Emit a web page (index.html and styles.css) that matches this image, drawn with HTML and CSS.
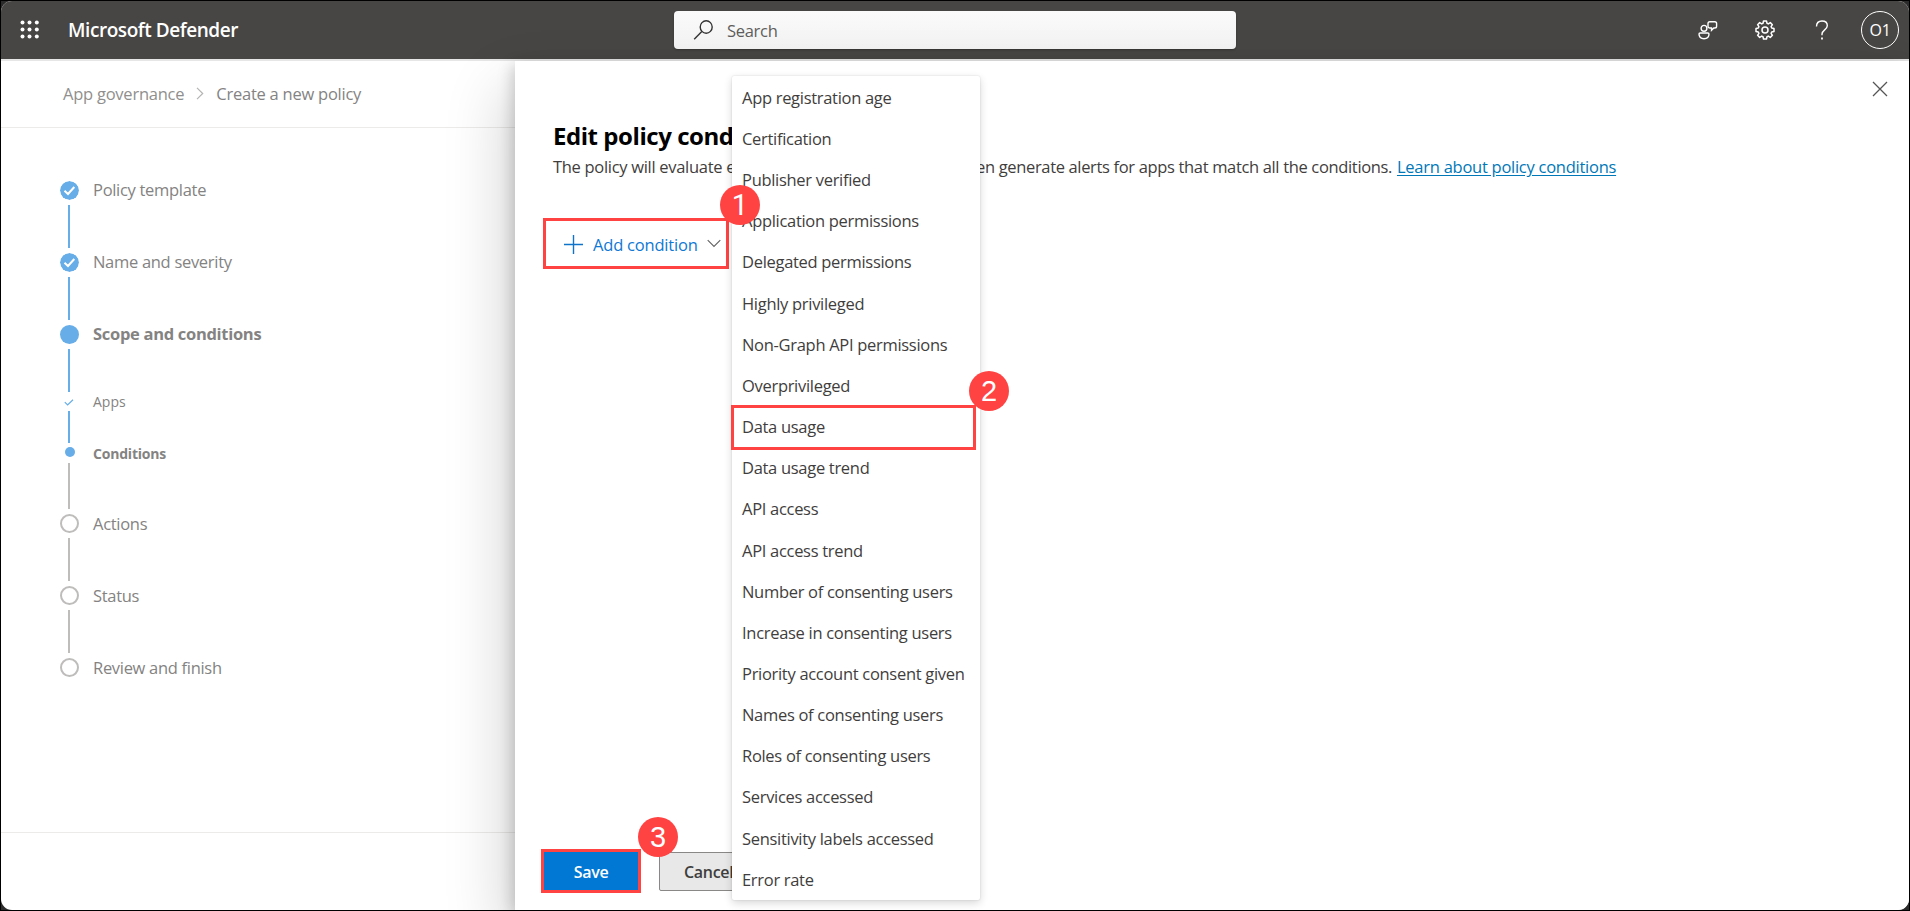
FILE: index.html
```html
<!DOCTYPE html>
<html lang="en">
<head>
<meta charset="utf-8">
<title>Microsoft Defender</title>
<link rel="stylesheet" href="styles.css">
</head>
<body>
<div class="frame">
<div class="window">
  <header class="topbar">
    <svg class="waffle" width="20" height="20" viewBox="0 0 20 20"><g fill="#fff"><circle cx="2.5" cy="2.5" r="2"/><circle cx="9.5" cy="2.5" r="2"/><circle cx="16.8" cy="2.5" r="2"/><circle cx="2.5" cy="9.5" r="2"/><circle cx="9.5" cy="9.5" r="2"/><circle cx="16.8" cy="9.5" r="2"/><circle cx="2.5" cy="16.5" r="2"/><circle cx="9.5" cy="16.5" r="2"/><circle cx="16.8" cy="16.5" r="2"/></g></svg>
    <div class="brand">Microsoft Defender</div>
    <div class="search">
      <svg width="20" height="20" viewBox="0 0 20 20" fill="none" stroke="#333" stroke-width="1.4"><ellipse cx="13.2" cy="7" rx="6" ry="6.2"/><path d="M8.8 11.4 1.2 19.3"/></svg>
      <span>Search</span>
    </div>
    <div class="actions">
      <svg width="20" height="20" viewBox="0 0 20 20" fill="none" stroke="#fff" stroke-width="1.4"><circle cx="6" cy="8.3" r="2.9"/><path d="M2.2 13h7.6c.8 0 1.2.4 1.2 1.1 0 2.8-2.1 4.6-5 4.6s-5-1.8-5-4.6c0-.7.4-1.1 1.2-1.1z"/><path d="M11.8 1.7h5a1.8 1.8 0 0 1 1.8 1.8v2.700a1.800 1.800 0 0 1-1.800 1.800h-1l-2.300 2.300V8h-1.700A1.800 1.800 0 0 1 10 6.200V3.500a1.800 1.800 0 0 1 1.800-1.800z"/></svg>
      <svg width="20" height="20" viewBox="0 0 20 20" fill="none" stroke="#fff" stroke-width="1.5" stroke-linejoin="round"><path d="M8.500 1h3l.5 2.300 1.300.6 2-1.300 2.100 2.100-1.300 2 .6 1.300 2.300.5v3l-2.300.5-.6 1.300 1.300 2-2.100 2.100-2-1.300-1.300.6-.5 2.300h-3L8 16.700l-1.300-.6-2 1.300-2.100-2.100 1.300-2-.6-1.300L1 11.500v-3L3.300 8l.6-1.300-1.300-2 2.100-2.100 2 1.300L8 3.300z"/><circle cx="10" cy="10" r="3"/></svg>
      <svg width="14" height="20" viewBox="0 0 14 20" fill="none" stroke="#fff" stroke-width="1.400"><path d="M1.500 6.500C1.500 3 3.700 1 7 1s5.300 2 5.300 4.700c0 3.800-5.300 4.500-5.300 8.300v1.200"/><path d="M7 17.500v1.900" stroke-width="1.800"/></svg>
      <div class="avatar">O1</div>
    </div>
  </header>

  <div class="body">
    <main class="wizard">
      <nav class="crumbs">
        <span>App governance</span>
        <svg width="8" height="13" viewBox="0 0 8 13" fill="none" stroke="#b5b4b3" stroke-width="1.200"><path d="M1 .8 6.700 6.500 1 12.200"/></svg>
        <span class="current">Create a new policy</span>
      </nav>
      <div class="steps">
        <div class="step">
          <div class="rail"><svg class="mark" width="19" height="19" viewBox="0 0 19 19"><circle cx="9.500" cy="9.500" r="9.500" fill="#67ade7"/><path d="M4.500 9.700 8 13l6.300-7" fill="none" stroke="#fff" stroke-width="2"/></svg><i class="line done"></i></div>
          <span>Policy template</span>
        </div>
        <div class="step">
          <div class="rail"><svg class="mark" width="19" height="19" viewBox="0 0 19 19"><circle cx="9.500" cy="9.500" r="9.500" fill="#67ade7"/><path d="M4.500 9.700 8 13l6.300-7" fill="none" stroke="#fff" stroke-width="2"/></svg><i class="line done"></i></div>
          <span>Name and severity</span>
        </div>
        <div class="step">
          <div class="rail"><i class="mark filled"></i><i class="line done"></i></div>
          <span class="strong">Scope and conditions</span>
        </div>
        <div class="step sub apps">
          <div class="rail"><svg class="tick" width="10" height="9" viewBox="0 0 10 9" fill="none" stroke="#67ade7" stroke-width="1.200"><path d="M.8 5.200 3.600 8 9 2.700"/></svg><i class="line done"></i></div>
          <span>Apps</span>
        </div>
        <div class="step sub conditions">
          <div class="rail"><i class="dot"></i><i class="line"></i></div>
          <span class="strong">Conditions</span>
        </div>
        <div class="step low">
          <div class="rail"><i class="mark open"></i><i class="line"></i></div>
          <span>Actions</span>
        </div>
        <div class="step low">
          <div class="rail"><i class="mark open"></i><i class="line"></i></div>
          <span>Status</span>
        </div>
        <div class="step low">
          <div class="rail"><i class="mark open"></i></div>
          <span>Review and finish</span>
        </div>
      </div>
      <div class="wizard-footer"></div>
    </main>

    <section class="panel">
      <svg class="close" width="16" height="16" viewBox="0 0 16 16" fill="none" stroke="#555" stroke-width="1.300"><path d="M1 1l14 14M15 1 1 15"/></svg>
      <h1>Edit policy cond</h1>
      <p><span class="lead">The policy will evaluate e</span><span class="tail">en generate alerts for apps that match all the conditions.</span><a>Learn about policy conditions</a></p>
      <div class="add">
        <svg width="19" height="19" viewBox="0 0 19 19" stroke="#0f73c9" stroke-width="1.400"><path d="M9.500 0v19M0 9.500h19"/></svg>
        <span>Add condition</span>
        <svg width="14" height="9" viewBox="0 0 14 9" fill="none" stroke="#666" stroke-width="1.200"><path d="M.7 1.200 7 7.500l6.300-6.300"/></svg>
      </div>
      <div class="buttons">
        <div class="save"><span>Save</span><b class="badge three">3</b></div>
        <div class="cancel"><span>Cancel</span></div>
      </div>
    </section>
  </div>

  <ul class="menu">
    <li>App registration age</li>
    <li>Certification</li>
    <li>Publisher verified</li>
    <li>Application permissions</li>
    <li>Delegated permissions</li>
    <li>Highly privileged</li>
    <li>Non-Graph API permissions</li>
    <li>Overprivileged</li>
    <li class="picked">Data usage<b class="badge two">2</b></li>
    <li>Data usage trend</li>
    <li>API access</li>
    <li>API access trend</li>
    <li>Number of consenting users</li>
    <li>Increase in consenting users</li>
    <li>Priority account consent given</li>
    <li>Names of consenting users</li>
    <li>Roles of consenting users</li>
    <li>Services accessed</li>
    <li>Sensitivity labels accessed</li>
    <li>Error rate</li>
  </ul>
  <b class="badge one">1</b>
</div>
</div>
</body>
</html>
```
FILE: styles.css
```css
*, *::before { box-sizing: border-box; }
body { margin: 0; font-family: "Open Sans", "Noto Sans", sans-serif; font-size: 16.5px; letter-spacing: -0.3px; color: #3f3e3d; }
.frame { width: 1910px; height: 911px; padding: 1px; background: #2b2b2b; box-shadow: inset 0 0 0 1px #000; overflow: hidden; }
.window { position: relative; display: flex; flex-direction: column; width: 1908px; height: 909px; border-radius: 11px; overflow: hidden; background: #fff; }
svg { display: block; flex: none; }

.topbar { display: flex; align-items: center; height: 58px; flex: none; padding: 0 10px 0 19px; background: #484644; }
.waffle { margin-top: -1px; }
.brand { width: 606px; margin-left: 28px; font-size: 19px; font-weight: 600; letter-spacing: -0.44px; color: #fff; }
.search { display: flex; align-items: center; gap: 14px; width: 562px; height: 38px; padding-left: 19px; border-radius: 4px; background: linear-gradient(#fafafa, #f3f3f3); color: #605e5c; box-shadow: 0 1px 2px rgba(0,0,0,.3); }
.actions { display: flex; align-items: center; margin-left: auto; }
.actions svg + svg { margin-left: 37px; }
.actions svg:nth-child(3) { margin-left: 40px; }
.avatar { display: flex; align-items: center; justify-content: center; width: 38px; height: 38px; margin-left: 32px; border: 1px solid #fff; border-radius: 50%; color: #fff; font-size: 16px; letter-spacing: -0.2px; }

.body { display: flex; flex: 1; border-top: 2px solid #e6e6e6; }
.wizard { display: flex; flex-direction: column; width: 514px; color: #848382; }
.crumbs { display: flex; align-items: center; height: 67px; padding: 0 0 2px 62px; border-bottom: 1px solid #edebe9; gap: 12px; }
.crumbs span { color: #908f8d; letter-spacing: -0.24px; }
.crumbs .current { color: #848382; }
.steps { flex: 1; padding: 53px 0 0 59px; }
.step { display: flex; gap: 14px; height: 72px; line-height: 17px; }
.low { line-height: 19px; }
.rail { display: flex; flex-direction: column; align-items: center; width: 19px; flex: none; }
.mark { width: 19px; height: 19px; border-radius: 50%; }
.filled { background: #67ade7; }
.open { border: 2px solid #bebdbc; }
.line { width: 2px; height: 43px; margin: 5px 1px 0 0; background: #bebdbc; }
.done { background: #67ade7; }
.strong { font-weight: 700; }
.sub { font-size: 14px; letter-spacing: 0; }
.sub .strong { letter-spacing: -0.2px; }
.apps { height: 50px; line-height: 10px; }
.tick { margin-right: 1px; }
.apps .line { height: 32px; }
.dot { width: 10px; height: 10px; border-radius: 50%; background: #67ade7; }
.conditions { height: 67px; line-height: 14px; }
.conditions .line { height: 46px; margin-top: 6px; }
.wizard-footer { height: 78px; border-top: 1px solid #edebe9; }

.panel { position: relative; display: flex; flex-direction: column; flex: 1; padding: 59px 0 0 38px; background: #fff; box-shadow: -3px 4px 14px rgba(0,0,0,.18), -12px 26px 56px rgba(0,0,0,.16); }
.close { position: absolute; right: 21px; top: 20px; }
h1 { width: 182px; margin: 0; height: 33px; line-height: 32px; font-size: 24px; font-weight: 700; letter-spacing: -0.45px; white-space: nowrap; color: #000; }
p { display: flex; margin: 0; height: 28px; line-height: 28px; white-space: nowrap; }
.lead { width: 423px; }
.tail { width: 421px; letter-spacing: -0.34px; }
a { color: #0078b8; letter-spacing: -0.26px; text-decoration: underline; text-underline-offset: 2px; }
.add { display: flex; align-items: center; width: 186px; height: 51px; margin: 37px 0 0 -10px; padding: 2px 0 0 18px; border: 3px solid #ff4343; color: #0f78d4; }
.add span { width: 104px; margin: 0 10px; letter-spacing: -0.2px; white-space: nowrap; }
.add svg:last-child { margin-top: -3px; }
.badge { position: absolute; display: flex; align-items: center; justify-content: center; width: 40px; height: 40px; border-radius: 50%; background: #ff4343; color: #fff; font: 400 29px "Liberation Sans", Arial, sans-serif; letter-spacing: 0; }
.one { left: 719px; top: 184px; font-family: Roboto, "Open Sans", sans-serif; }
.buttons { display: flex; align-items: center; gap: 18px; margin: auto 0 17px -12px; font-weight: 600; font-size: 16px; }
.buttons span { margin-top: 1px; }
.save { position: relative; display: flex; align-items: center; justify-content: center; width: 100px; height: 44px; border: 3px solid #ff4343; background: #0078d4; color: #fff; }
.three { left: 94px; top: -35px; }
.cancel { display: flex; align-items: center; width: 98px; height: 39px; padding-left: 24px; border: 1px solid #8a8886; border-radius: 2px; background: #e8e8e8; }

.menu { position: absolute; left: 731px; top: 75px; width: 248px; height: 824px; margin: 0; padding: .8px 0 0; list-style: none; background: #fff; border-radius: 2px; box-shadow: 0 3px 8px rgba(0,0,0,.16), 0 0 2px rgba(0,0,0,.14); }
.menu li { position: relative; height: 41.16px; padding-left: 10px; line-height: 41.16px; white-space: nowrap; }
.picked::before { content: ""; position: absolute; left: -1px; top: -1px; width: 245px; height: 45px; border: 3px solid #ff4343; }
.two { left: 237px; top: -35px; }
```
